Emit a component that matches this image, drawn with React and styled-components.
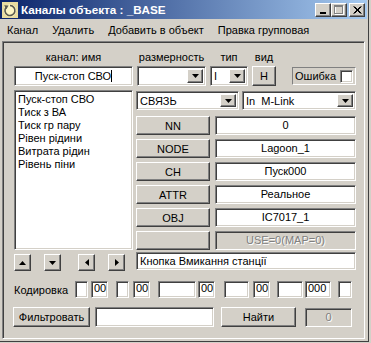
import React from "react";
import styled, { createGlobalStyle, css } from "styled-components";

const GlobalStyle = createGlobalStyle`
  html, body {
    margin: 0;
    padding: 0;
    background: #d4d0c8;
  }
  body {
    font-family: "Liberation Sans", Arial, sans-serif;
    font-size: 11px;
    color: #000;
  }
  * {
    box-sizing: border-box;
  }
`;

const sunken = css`
  border: 1px solid;
  border-color: #808080 #fff #fff #808080;
  box-shadow: inset 1px 1px #404040, inset -1px -1px #d4d0c8;
`;

const raised = css`
  border: 1px solid;
  border-color: #fff #404040 #404040 #fff;
  box-shadow: inset -1px -1px #808080, inset 1px 1px #d4d0c8;
  background: #d4d0c8;
`;

const disabledText = css`
  color: #808080;
  text-shadow: 1px 1px 0 #fff;
`;

const Window = styled.div`
  width: 369px;
  height: 342px;
  display: flex;
  flex-direction: column;
  background: #d4d0c8;
  border-right: 1px solid #404040;
  border-bottom: 1px solid #404040;
`;

const TitleBar = styled.div`
  height: 19px;
  width: 367px;
  display: flex;
  align-items: center;
  padding: 0 2px;
  background: linear-gradient(to right, #0a246a, #a6caf0);
`;

const TitleText = styled.div`
  flex: 1;
  margin-left: 3px;
  color: #fff;
  font-weight: bold;
  font-size: 11.7px;
  line-height: 19px;
  white-space: nowrap;
`;

const TitleButton = styled.div`
  ${raised}
  width: 16px;
  height: 14px;
  margin-left: ${(p) => p.$gap || 0}px;
  display: flex;
  align-items: center;
  justify-content: center;
`;

const MenuBar = styled.div`
  height: 21px;
  display: flex;
  align-items: center;
`;

const MenuItem = styled.div`
  padding: 0 7px;
  line-height: 20px;
  white-space: nowrap;
`;

const Panel = styled.div`
  ${sunken}
  margin: 1px 3px 0 2px;
  height: 298px;
  padding: 9px 8px 0 11px;
  display: flex;
  flex-direction: column;
`;

const Header = styled.div`
  display: grid;
  grid-template-columns: 119px 69px 38px 24px 1fr;
  grid-template-rows: 13px 20px;
  column-gap: 4px;
  row-gap: 2px;
`;

const Label = styled.div`
  text-align: center;
  line-height: 13px;
  white-space: nowrap;
`;

const Field = styled.div`
  ${sunken}
  height: ${(p) => p.$h || 20}px;
  width: ${(p) => (p.$w ? `${p.$w}px` : "auto")};
  margin-left: ${(p) => p.$ml || 0}px;
  background: ${(p) => (p.$disabled ? "#d4d0c8" : "#fff")};
  ${(p) => p.$disabled && disabledText}
  line-height: ${(p) => (p.$h || 20) - 4}px;
  padding: 0 3px;
  white-space: nowrap;
  overflow: hidden;
  display: flex;
  align-items: center;
  justify-content: ${(p) => (p.$align === "center" ? "center" : "flex-start")};
`;

const Caret = styled.span`
  display: inline-block;
  width: 1px;
  height: 12px;
  background: #000;
`;

const Combo = styled.div`
  ${sunken}
  height: ${(p) => p.$h || 20}px;
  background: #fff;
  display: flex;
  align-items: stretch;
  padding: 2px;
`;

const ComboText = styled.div`
  flex: 1;
  padding-left: 1px;
  display: flex;
  align-items: center;
  white-space: nowrap;
`;

const DropButton = styled.div`
  ${raised}
  width: 16px;
  display: flex;
  align-items: center;
  justify-content: center;
`;

const Button = styled.div`
  ${raised}
  height: ${(p) => p.$h || 20}px;
  width: ${(p) => (p.$w ? `${p.$w}px` : "auto")};
  margin-left: ${(p) => p.$ml || 0}px;
  display: flex;
  align-items: center;
  justify-content: center;
  white-space: nowrap;
`;

const ErrorBox = styled.div`
  border: 1px solid;
  border-color: #808080 #fff #fff #808080;
  width: 64px;
  height: 18px;
  justify-self: end;
  align-self: center;
  display: flex;
  align-items: center;
  justify-content: space-between;
  padding: 0 2px;
`;

const CheckBox = styled.div`
  ${sunken}
  width: 13px;
  height: 13px;
  background: #fff;
`;

const Main = styled.div`
  display: grid;
  grid-template-columns: 119px 1fr;
  column-gap: 3px;
  margin-top: 4px;
  height: 160px;
`;

const ListBox = styled.div`
  ${sunken}
  background: #fff;
  padding: 2px 3px;
`;

const ListItem = styled.div`
  line-height: 13px;
  white-space: nowrap;
`;

const RightCol = styled.div`
  display: flex;
  flex-direction: column;
  padding-top: 1px;
`;

const ComboRow = styled.div`
  display: grid;
  grid-template-columns: 103px 1fr;
  column-gap: 3px;
  margin-bottom: 6px;
`;

const PropRows = styled.div`
  display: grid;
  grid-template-columns: 74px 1fr;
  column-gap: 5px;
  row-gap: 4px;
`;

const NavRow = styled.div`
  display: grid;
  grid-template-columns: 119px 1fr;
  column-gap: 3px;
  margin-top: 2px;
  height: 19px;
`;

const Arrows = styled.div`
  display: flex;
  align-items: flex-end;
`;

const ArrowButton = styled.div`
  ${raised}
  width: 17px;
  height: 17px;
  margin-left: ${(p) => p.$ml || 0}px;
  display: flex;
  align-items: center;
  justify-content: center;
`;

const CodeRow = styled.div`
  display: flex;
  align-items: center;
  margin-top: 10px;
  height: 17px;
`;

const CodeLabel = styled.div`
  width: 61px;
  white-space: nowrap;
`;

const CodeBox = styled.div`
  ${sunken}
  width: ${(p) => p.$w}px;
  height: 17px;
  margin-left: ${(p) => p.$ml}px;
  background: #fff;
  padding: 0 2px;
  line-height: 13px;
  overflow: hidden;
`;

const FilterRow = styled.div`
  display: flex;
  align-items: center;
  margin-top: 9px;
  margin-left: -1px;
`;

const Tri = ({ dir }) => {
  const pts = {
    up: "0,4 7,4 3.5,0",
    down: "0,0 7,0 3.5,4",
    left: "4,0 4,7 0,3.5",
    right: "0,0 0,7 4,3.5",
  }[dir];
  const vertical = dir === "up" || dir === "down";
  return (
    <svg width={vertical ? 7 : 4} height={vertical ? 4 : 7}>
      <polygon points={pts} fill="#000" />
    </svg>
  );
};

const AppIcon = () => (
  <svg width="16" height="16" viewBox="0 0 16 16">
    <rect x="0" y="0" width="16" height="16" fill="#e8dca0" />
    <circle cx="8" cy="8.5" r="6.3" fill="#fdf6c4" />
    <path
      d="M4.2 5.2 A5 5 0 1 0 8 3.5"
      fill="none"
      stroke="#5a5a50"
      strokeWidth="1.6"
    />
    <polygon points="2.2,3.2 6.6,3.4 4.4,7.2" fill="#5a5a50" />
  </svg>
);

const rows = [
  { key: "NN", value: "0" },
  { key: "NODE", value: "Lagoon_1" },
  { key: "CH", value: "Пуск000" },
  { key: "ATTR", value: "Реальное" },
  { key: "OBJ", value: "IC7017_1" },
  { key: "", value: "USE=0(MAP=0)", disabled: true },
];

const channels = [
  "Пуск-стоп СВО",
  "Тиск з ВА",
  "Тиск гр пару",
  "Рівен рідини",
  "Витрата рідин",
  "Рівень піни",
];

const codes = [
  { w: 13, ml: 0, v: "" },
  { w: 17, ml: 3, v: "00" },
  { w: 13, ml: 8, v: "" },
  { w: 17, ml: 4, v: "00" },
  { w: 38, ml: 8, v: "" },
  { w: 17, ml: 2, v: "00" },
  { w: 25, ml: 9, v: "" },
  { w: 17, ml: 4, v: "00" },
  { w: 26, ml: 7, v: "" },
  { w: 26, ml: 2, v: "000" },
  { w: 14, ml: 7, v: "" },
];

export default function App() {
  return (
    <>
      <GlobalStyle />
      <Window>
        <TitleBar>
          <AppIcon />
          <TitleText>Каналы объекта : _BASE</TitleText>
          <TitleButton>
            <svg width="8" height="8">
              <rect x="1" y="6" width="6" height="2" fill="#000" />
            </svg>
          </TitleButton>
          <TitleButton>
            <svg width="10" height="10">
              <rect x="1.5" y="1.5" width="8" height="8" fill="none" stroke="#fff" />
              <rect x="0.5" y="0.5" width="8" height="8" fill="none" stroke="#808080" />
              <rect x="0" y="0" width="9" height="2" fill="#808080" />
            </svg>
          </TitleButton>
          <TitleButton $gap={2}>
            <svg width="9" height="8">
              <path
                d="M0.5 0.5 L7.5 7.5 M1.5 0.5 L8.5 7.5 M7.5 0.5 L0.5 7.5 M8.5 0.5 L1.5 7.5"
                stroke="#000"
                strokeWidth="1"
              />
            </svg>
          </TitleButton>
        </TitleBar>

        <MenuBar>
          <MenuItem>Канал</MenuItem>
          <MenuItem>Удалить</MenuItem>
          <MenuItem>Добавить в объект</MenuItem>
          <MenuItem>Правка групповая</MenuItem>
        </MenuBar>

        <Panel>
          <Header>
            <Label>канал: имя</Label>
            <Label>размерность</Label>
            <Label>тип</Label>
            <Label>вид</Label>
            <div />
            <Field $align="center">
              Пуск-стоп СВО
              <Caret />
            </Field>
            <Combo>
              <ComboText />
              <DropButton>
                <Tri dir="down" />
              </DropButton>
            </Combo>
            <Combo>
              <ComboText>I</ComboText>
              <DropButton>
                <Tri dir="down" />
              </DropButton>
            </Combo>
            <Button>Н</Button>
            <ErrorBox>
              <span>Ошибка</span>
              <CheckBox />
            </ErrorBox>
          </Header>

          <Main>
            <ListBox>
              {channels.map((c) => (
                <ListItem key={c}>{c}</ListItem>
              ))}
            </ListBox>
            <RightCol>
              <ComboRow>
                <Combo $h={19}>
                  <ComboText>СВЯЗЬ</ComboText>
                  <DropButton>
                    <Tri dir="down" />
                  </DropButton>
                </Combo>
                <Combo $h={19}>
                  <ComboText>In&nbsp;&nbsp;M-Link</ComboText>
                  <DropButton>
                    <Tri dir="down" />
                  </DropButton>
                </Combo>
              </ComboRow>
              <PropRows>
                {rows.map((r, i) => (
                  <React.Fragment key={i}>
                    <Button $h={19}>{r.key}</Button>
                    <Field $h={19} $align="center" $disabled={r.disabled}>
                      {r.value}
                    </Field>
                  </React.Fragment>
                ))}
              </PropRows>
            </RightCol>
          </Main>

          <NavRow>
            <Arrows>
              <ArrowButton>
                <Tri dir="up" />
              </ArrowButton>
              <ArrowButton $ml={13}>
                <Tri dir="down" />
              </ArrowButton>
              <ArrowButton $ml={17}>
                <Tri dir="left" />
              </ArrowButton>
              <ArrowButton $ml={13}>
                <Tri dir="right" />
              </ArrowButton>
            </Arrows>
            <Field $h={18}>Кнопка Вмикання станції</Field>
          </NavRow>

          <CodeRow>
            <CodeLabel>Кодировка</CodeLabel>
            {codes.map((c, i) => (
              <CodeBox key={i} $w={c.w} $ml={c.ml}>
                {c.v}
              </CodeBox>
            ))}
          </CodeRow>

          <FilterRow>
            <Button $w={77}>Фильтровать</Button>
            <Field $w={119} $ml={5} />
            <Button $w={75} $ml={7}>
              Найти
            </Button>
            <Field $h={19} $w={47} $ml={9} $align="center" $disabled>
              0
            </Field>
          </FilterRow>
        </Panel>
      </Window>
    </>
  );
}
